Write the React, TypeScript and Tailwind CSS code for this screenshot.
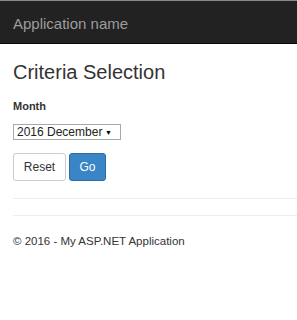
export default function App() {
  return (
    <div className="min-h-[320px] bg-white font-['Liberation_Sans',Arial,sans-serif] text-[#333]">
      {/* Navbar */}
      <nav className="h-[44px] border-t border-t-[#8a8a8a] border-b border-b-[#080808] bg-[#222] flex items-center px-[13px] pt-[2px]">
        <span className="text-[15px] leading-none text-[#9d9d9d]">Application name</span>
      </nav>

      <div className="pl-[13px]">
        <h2 className="mt-[17px] text-[20px] leading-[22px] text-[#333]">Criteria Selection</h2>

        <div className="mt-[16px]">
          <label className="block text-[11px] leading-[15px] font-bold text-[#333]">Month</label>
          <div className="mt-[10px] w-[108px] h-[16px] border border-[#a9a9a9] flex items-center justify-between pl-[3px] pr-[8px] whitespace-nowrap">
            <span className="text-[12px] leading-none text-[#222] whitespace-nowrap">2016 December</span>
            <span className="text-[7px] leading-none text-black shrink-0">▼</span>
          </div>
        </div>

        <div className="mt-[13px] flex gap-[3px]">
          <button className="w-[53px] h-[28px] rounded-[3px] border border-[#ccc] bg-white text-[12px] text-[#333]">
            Reset
          </button>
          <button className="w-[37px] h-[28px] rounded-[3px] border border-[#2e6da4] bg-[#3a85c6] text-[12px] text-white">
            Go
          </button>
        </div>

        <hr className="mt-[17px] border-0 border-t border-t-[#eee]" />
        <hr className="mt-[16px] border-0 border-t border-t-[#eee]" />

        <footer className="mt-[18px] text-[11.5px] leading-[14px] text-[#333]">© 2016 - My ASP.NET Application</footer>
      </div>
    </div>
  );
}
